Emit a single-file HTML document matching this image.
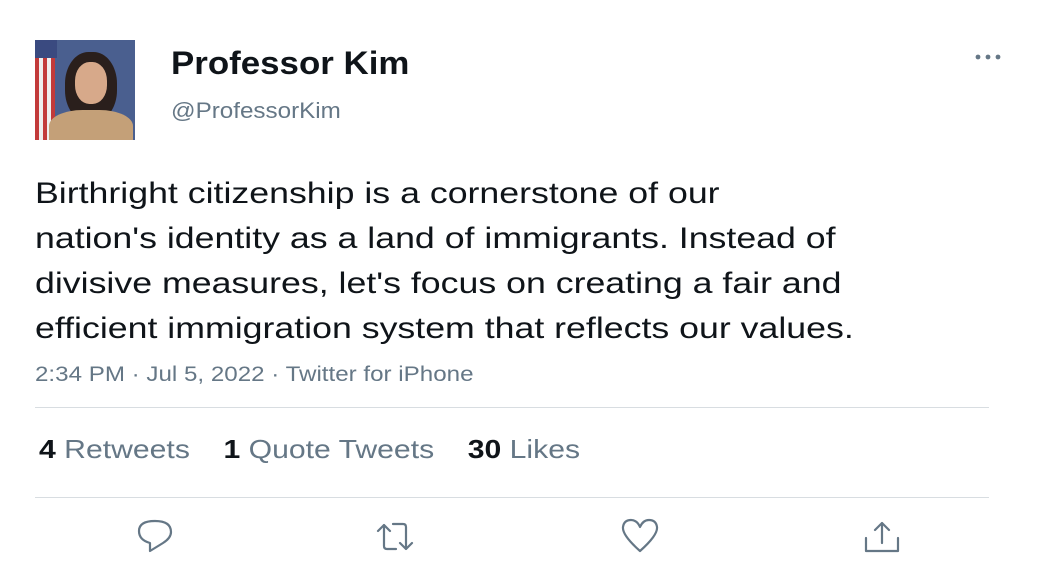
<!DOCTYPE html>
<html><head><style>
body{margin:0;width:1050px;height:570px;background:#fff;font-family:"Liberation Sans",Arial,sans-serif;position:relative;overflow:hidden;color:#0f1419}
.a{position:absolute;transform-origin:0 0;white-space:nowrap}
.g{color:#657786}
</style></head><body>
<div class="a" style="left:35px;top:40px;width:100px;height:100px;background:linear-gradient(90deg,#c23a3a 0 4%,#eee 4% 8%,#c23a3a 8% 12%,#eee 12% 16%,#c23a3a 16% 20%,#4a5f8f 20%);overflow:hidden">
 <div class="a" style="left:0;top:0;width:22px;height:18px;background:#3a4a80"></div>
 <div class="a" style="left:30px;top:12px;width:52px;height:70px;border-radius:45%;background:#2a1f1c"></div>
 <div class="a" style="left:40px;top:22px;width:32px;height:42px;border-radius:45%;background:#d7a98a"></div>
 <div class="a" style="left:14px;top:70px;width:84px;height:40px;border-radius:40% 40% 0 0;background:#c4a078"></div>
</div>
<div class="a" style="left:171px;top:45px;font-size:32px;font-weight:bold;transform:scaleX(1.09)">Professor Kim</div>
<div class="a g" style="left:171px;top:98px;font-size:22px;transform:scaleX(1.1)">@ProfessorKim</div>
<svg class="a" style="left:970px;top:50px" width="34" height="14" fill="#657786"><circle cx="8" cy="7" r="2.4"/><circle cx="18" cy="7" r="2.4"/><circle cx="28" cy="7" r="2.4"/></svg>
<div class="a" style="left:35px;top:171px;font-size:30px;line-height:45px;transform:scaleX(1.19)">Birthright citizenship is a cornerstone of our<br>nation's identity as a land of immigrants. Instead of<br>divisive measures, let's focus on creating a fair and<br>efficient immigration system that reflects our values.</div>
<div class="a g" style="left:35px;top:363px;font-size:21px;transform:scaleX(1.15)">2:34 PM · Jul 5, 2022 · Twitter for iPhone</div>
<div class="a" style="left:35px;top:407px;width:954px;height:1px;background:#d8dde1"></div>
<div class="a" style="left:39px;top:434px;font-size:26px;transform:scaleX(1.16)"><b>4</b> <span class="g">Retweets</span>&nbsp;&nbsp;&nbsp; <b>1</b> <span class="g">Quote Tweets</span>&nbsp;&nbsp;&nbsp; <b>30</b> <span class="g">Likes</span></div>
<div class="a" style="left:35px;top:497px;width:954px;height:1px;background:#d8dde1"></div>
<svg class="a" style="left:0;top:0" width="1050" height="570" fill="none" stroke="#657786" stroke-width="2.2" stroke-linecap="round" stroke-linejoin="round">
<path d="M150 551 L150 543 Q139 540 139 531 Q139 521 155 521 Q171 521 171 532 Q171 538 163 543 Z"/>
<path d="M384 525 L378 531 M384 525 L390 531 M384 525 V546 Q384 549 387 549 H396 M393 524 H403 Q406 524 406 527 V549 M406 549 L400 543 M406 549 L412 543"/>
<path d="M640 551 Q622 535 623 527 Q624 520 631 520 Q637 520 640 527 Q643 520 649 520 Q656 520 657 527 Q658 535 640 551 Z"/>
<path d="M882 523 V543 M882 523 L875 530 M882 523 L889 530 M866 538 V551 H898 V538"/>
</svg>
</body></html>
